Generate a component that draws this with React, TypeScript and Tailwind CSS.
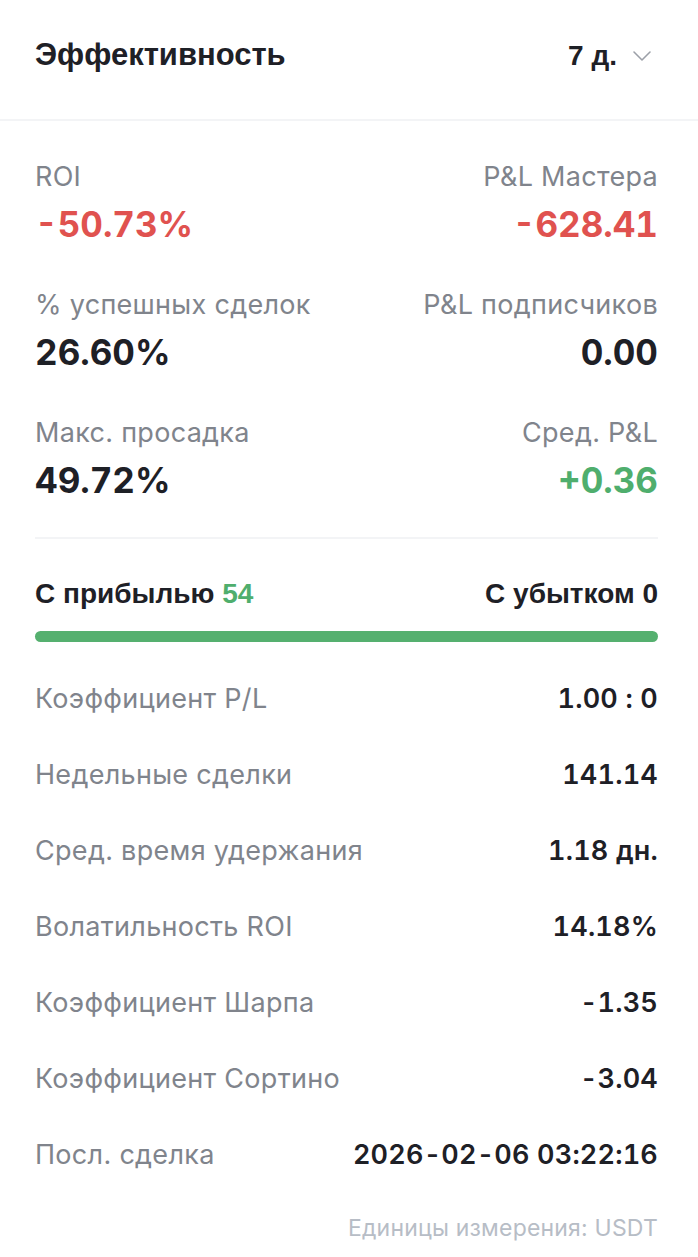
import { ChevronDown } from "lucide-react";

const top = [
  [
    { label: "ROI", value: "-50.73%", tone: "red" },
    { label: "P&L Мастера", value: "-628.41", tone: "red" },
  ],
  [
    { label: "% успешных сделок", value: "26.60%", tone: "dark" },
    { label: "P&L подписчиков", value: "0.00", tone: "dark" },
  ],
  [
    { label: "Макс. просадка", value: "49.72%", tone: "dark" },
    { label: "Сред. P&L", value: "+0.36", tone: "green" },
  ],
];

const rows = [
  ["Коэффициент P/L", "1.00 : 0"],
  ["Недельные сделки", "141.14"],
  ["Сред. время удержания", "1.18 дн."],
  ["Волатильность ROI", "14.18%"],
  ["Коэффициент Шарпа", "-1.35"],
  ["Коэффициент Сортино", "-3.04"],
  ["Посл. сделка", "2026-02-06 03:22:16"],
];

const toneClass: Record<string, string> = {
  red: "text-[#e0524f]",
  dark: "text-[#1e2026]",
  green: "text-[#4fae6d]",
};

export default function App() {
  return (
    <div className="w-[698px] min-h-[1257px] bg-white font-['Inter',sans-serif]">
      {/* Header */}
      <div className="h-[121px] pb-[8px] border-b-2 border-[#f3f4f6] pl-[35px] pr-[40px] flex items-center justify-between">
        <h1 className="font-['Liberation_Sans',Arial,sans-serif] font-bold text-[31px] text-[#1e2026]">
          Эффективность
        </h1>
        <button className="flex items-center gap-[9px] text-[#1e2026]">
          <span className="font-['Liberation_Sans',Arial,sans-serif] font-bold text-[28px]">7 д.</span>
          <ChevronDown className="w-[32px] h-[32px] text-[#9ca0a8]" strokeWidth={1.2} />
        </button>
      </div>

      <div className="pl-[35px] pr-[40px]">
        {/* Key metrics */}
        <div className="pt-[40px] pb-[32px] flex flex-col gap-[40px] border-b-2 border-[#f3f4f6]">
          {top.map((pair, i) => (
            <div key={i} className="flex justify-between">
              {pair.map((m, j) => (
                <div key={j} className={`flex flex-col ${j === 1 ? "items-end" : "items-start"}`}>
                  <span className="text-[27px] leading-[32px] tracking-[0.3px] text-[#80848c]">{m.label}</span>
                  <span className={`mt-[6px] text-[35px] leading-[50px] font-bold tabular-nums ${toneClass[m.tone]}`}>
                    {m.value}
                  </span>
                </div>
              ))}
            </div>
          ))}
        </div>

        {/* Win/loss */}
        <div className="pt-[37px] font-['Liberation_Sans',Arial,sans-serif] font-bold text-[28px] text-[#1e2026] flex justify-between leading-[36px]">
          <span>
            С прибылью <span className="text-[#4fae6d]">54</span>
          </span>
          <span>С убытком 0</span>
        </div>
        <div className="mt-[19px] h-[11px] rounded-full bg-[#55b06f]" />

        {/* Details */}
        <div className="pt-[19px] flex flex-col">
          {rows.map(([label, value]) => (
            <div key={label} className="h-[76px] flex items-center justify-between">
              <span className="text-[27px] tracking-[0.3px] text-[#80848c]">{label}</span>
              <span className="text-[27px] font-semibold tabular-nums tracking-[0.2px] text-[#1e2026]">{value}</span>
            </div>
          ))}
        </div>

        <div className="pt-[18px] pb-[16px] text-right text-[23px] tracking-[0.2px] text-[#b7bdc6]">Единицы измерения: USDT</div>
      </div>
    </div>
  );
}
